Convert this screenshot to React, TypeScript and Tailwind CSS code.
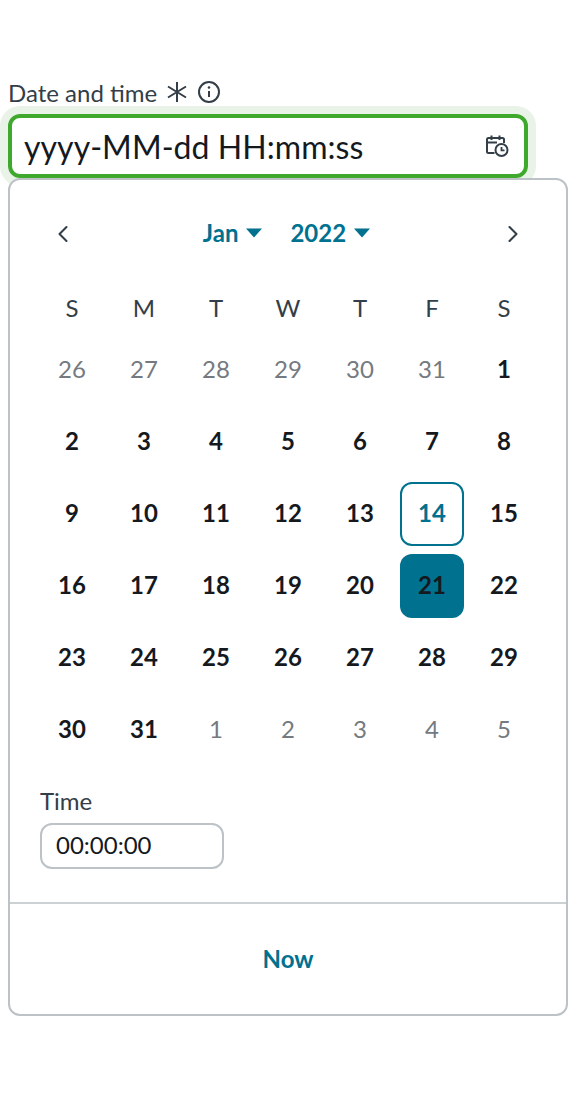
import { ChevronLeft, ChevronRight } from 'lucide-react';

const weekDays = ['S', 'M', 'T', 'W', 'T', 'F', 'S'];

// muted: days of the neighbouring months
const weeks: { day: number; muted?: boolean }[][] = [
  [
    { day: 26, muted: true },
    { day: 27, muted: true },
    { day: 28, muted: true },
    { day: 29, muted: true },
    { day: 30, muted: true },
    { day: 31, muted: true },
    { day: 1 },
  ],
  [2, 3, 4, 5, 6, 7, 8].map((day) => ({ day })),
  [9, 10, 11, 12, 13, 14, 15].map((day) => ({ day })),
  [16, 17, 18, 19, 20, 21, 22].map((day) => ({ day })),
  [23, 24, 25, 26, 27, 28, 29].map((day) => ({ day })),
  [
    { day: 30 },
    { day: 31 },
    { day: 1, muted: true },
    { day: 2, muted: true },
    { day: 3, muted: true },
    { day: 4, muted: true },
    { day: 5, muted: true },
  ],
];

function Caret() {
  return (
    <svg width="16" height="10" viewBox="0 0 16 10" className="ml-[8px]">
      <path d="M0 0.5 H16 L8 9.5 Z" fill="#00718f" />
    </svg>
  );
}

function DateTimeIcon() {
  return (
    <svg width="24" height="24" viewBox="0 0 24 24" fill="none" stroke="#333e48" strokeWidth="2">
      <path d="M9.5 19 H3.5 Q2 19 2 17.500 V5.500 Q2 4 3.500 4 H17.500 Q19 4 19 5.500 V9" />
      <path d="M6.500 1.500 V6 M14.500 1.500 V6 M2 8.500 H12" />
      <circle cx="16.500" cy="16" r="6" />
      <path d="M16.500 13 V16.300 H19.500" strokeWidth="1.800" />
    </svg>
  );
}

function DayCell({ day, muted }: { day: number; muted?: boolean }) {
  let cls = 'text-[#15191e] font-bold';
  if (muted) cls = 'text-[#747a80] font-normal';
  if (day === 14) cls = 'text-[#00718f] font-bold border-2 border-[#00718f]';
  if (day === 21) cls = 'text-[#15191e] font-bold bg-[#00718f]';

  return (
    <div className="flex h-[72px] w-[72px] items-center justify-center">
      <div className={`flex h-[64px] w-[64px] items-center justify-center rounded-[12px] pb-[2px] text-[24px] ${cls}`}>
        {day}
      </div>
    </div>
  );
}

export default function App() {
  return (
    <div className="h-[1104px] w-[568px] overflow-hidden bg-white pt-[78px] font-['Lato',sans-serif] text-[#15191e]">
      <div className="ml-[8px] flex h-[30px] items-center text-[24px] leading-[30px] text-[#333e48]">
        <span>Date and time</span>
        <svg width="24" height="24" viewBox="0 0 24 24" className="ml-[8px] -mt-[2px]" stroke="#333e48" strokeWidth="2" fill="none">
          <path d="M12 2 V22 M3 6.500 L21 17.500 M21 6.500 L3 17.500" />
        </svg>
        <svg width="24" height="24" viewBox="0 0 24 24" className="ml-[8px] -mt-[3px]" stroke="#333e48" strokeWidth="2" fill="none">
          <circle cx="12" cy="12" r="10" />
          <path d="M12 11 V17" />
          <circle cx="12" cy="7.500" r="1.300" fill="#333e48" stroke="none" />
        </svg>
      </div>

      <div className="ml-[8px] mt-[6px] flex h-[64px] w-[520px] items-center justify-between rounded-[12px] border-[4px] border-[#3fa92d] pl-[12px] pr-[15px] text-[32px] tracking-[0.05px] shadow-[0_0_0_8px_#e9f3e7]">
        <span className="pt-[2px]">yyyy-MM-dd HH:mm:ss</span>
        <DateTimeIcon />
      </div>

      <div className="relative ml-[8px] h-[838px] w-[560px] rounded-[12px] border-2 border-[#bcc2c6] bg-white">
        <div className="flex h-[106px] items-center justify-between pl-[39px] pr-[39px]">
          <ChevronLeft size={28} strokeWidth={1.800} color="#333e48" className="mt-[2px]" />
          <div className="mr-[3px] flex items-center text-[24px] font-bold text-[#00718f]">
            <span className="flex items-center">
              Jan
              <Caret />
            </span>
            <span className="ml-[28px] flex items-center">
              2022
              <Caret />
            </span>
          </div>
          <ChevronRight size={28} strokeWidth={1.800} color="#333e48" className="mt-[2px]" />
        </div>

        <div className="pl-[26px]">
          <div className="flex h-[44px] items-center">
            {weekDays.map((d, i) => (
              <div key={i} className="w-[72px] text-center text-[24px] text-[#333e48]">
                {d}
              </div>
            ))}
          </div>
          <div className="mt-[4px]">
            {weeks.map((week, i) => (
              <div key={i} className="flex">
                {week.map((c, j) => (
                  <DayCell key={j} day={c.day} muted={c.muted} />
                ))}
              </div>
            ))}
          </div>
        </div>

        <div className="ml-[30px] mt-[20px] text-[24px] leading-[30px] text-[#333e48]">Time</div>
        <div className="ml-[30px] mt-[7px] flex h-[46px] w-[184px] items-center rounded-[12px] border-2 border-[#bcc2c6] pb-[2px] pl-[14px] text-[24px]">
          00:00:00
        </div>

        <div className="mt-[33px] border-t-2 border-[#ccd1d4]" />
        <div className="flex h-[112px] items-center justify-center pb-[2px] text-[24px] font-bold text-[#00718f]">Now</div>
      </div>
    </div>
  );
}
